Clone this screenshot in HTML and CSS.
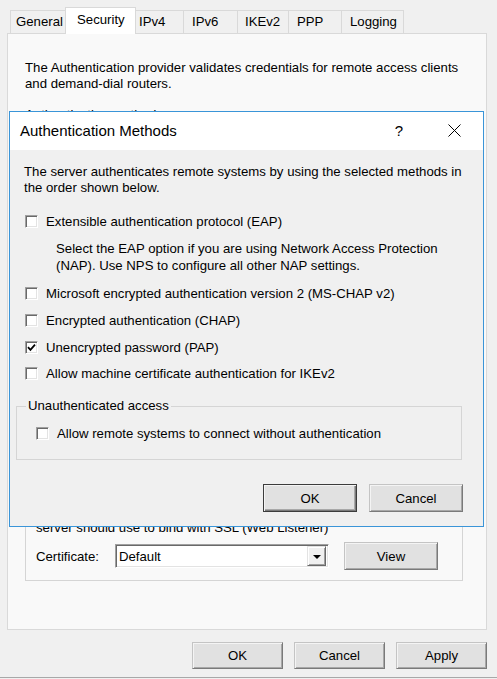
FILE: index.html
```html
<!DOCTYPE html>
<html>
<head>
<meta charset="utf-8">
<link rel="stylesheet" href="styles.css">
</head>
<body>
<div class="window">
  <div class="tabs">
    <div class="tab tab-general">General</div>
    <div class="tab tab-security selected">Security</div>
    <div class="tab tab-ipv4">IPv4</div>
    <div class="tab tab-ipv6">IPv6</div>
    <div class="tab tab-ikev2">IKEv2</div>
    <div class="tab tab-ppp">PPP</div>
    <div class="tab tab-logging">Logging</div>
  </div>
  <div class="panel">
    <p class="intro">The Authentication provider validates credentials for remote access clients and demand-dial routers.</p>
    <p class="label">Authentication methods:</p>
    <fieldset class="ssl">
      <legend>SSL Certificate Binding</legend>
      <p class="ssl-text">Select the certificate that the Secure Socket Tunneling Protocol (SSTP)<br>server should use to bind with SSL (Web Listener)</p>
      <div class="cert-row">
        <span class="cert-label">Certificate:</span>
        <div class="select"><span class="select-value">Default</span><span class="select-btn"><span class="tri"></span></span></div>
        <button class="btn view-btn">View</button>
      </div>
    </fieldset>
  </div>
  <div class="footer">
    <button class="btn foot-btn">OK</button>
    <button class="btn foot-btn">Cancel</button>
    <button class="btn foot-btn">Apply</button>
  </div>

  <div class="dialog">
    <div class="dlg-title">
      <span class="dlg-name">Authentication Methods</span>
      <span class="help">?</span>
      <svg class="close" width="13" height="13" viewBox="0 0 13 13"><path d="M0.5 0.5 L12.5 12.5 M12.5 0.5 L0.5 12.5" stroke="#000" stroke-width="1" fill="none"/></svg>
    </div>
    <div class="dlg-body">
      <p class="dlg-intro">The server authenticates remote systems by using the selected methods in<br>the order shown below.</p>
      <div class="check-row first"><span class="cb"></span><span>Extensible authentication protocol (EAP)</span></div>
      <p class="note">Select the EAP option if you are using Network Access Protection<br>(NAP). Use NPS to configure all other NAP settings.</p>
      <div class="check-row gap-a"><span class="cb"></span><span>Microsoft encrypted authentication version 2 (MS-CHAP v2)</span></div>
      <div class="check-row gap-a"><span class="cb"></span><span>Encrypted authentication (CHAP)</span></div>
      <div class="check-row gap-a"><span class="cb checked"><svg width="9" height="9" viewBox="0 0 9 9"><path d="M1 4.2 L3.4 6.8 L8 1.6" stroke="#000" stroke-width="1.8" fill="none"/></svg></span><span>Unencrypted password (PAP)</span></div>
      <div class="check-row gap-b"><span class="cb"></span><span>Allow machine certificate authentication for IKEv2</span></div>
      <fieldset class="group">
        <legend>Unauthenticated access</legend>
        <div class="check-row inner"><span class="cb"></span><span>Allow remote systems to connect without authentication</span></div>
      </fieldset>
      <div class="dlg-buttons">
        <button class="btn dlg-btn default">OK</button>
        <button class="btn dlg-btn">Cancel</button>
      </div>
    </div>
  </div>
</div>
</body>
</html>
```

FILE: styles.css
```css
* { box-sizing: border-box; }
html, body { margin: 0; padding: 0; }
body {
  background: #f0f0f0;
  font-family: "Liberation Sans", Arial, sans-serif;
  font-size: 13.2px;
  color: #000;
  width: 497px;
  height: 679px;
  overflow: hidden;
}
p { margin: 0; }
.window {
  position: relative;
  height: 678px;
  border-bottom: 1px solid #a8a8a8;
}

/* tabs */
.tabs {
  position: relative;
  z-index: 1;
  display: flex;
  align-items: flex-end;
  height: 33px;
  padding-left: 10px;
}
.tab {
  height: 23px;
  line-height: 22px;
  border: 1px solid #d9d9d9;
  border-bottom: none;
  background: #f0f0f0;
  margin-left: -1px;
  white-space: nowrap;
}
.tab-general { width: 58px; padding-left: 5px; margin-left: 0; }
.tab-security { width: 67px; padding-left: 10px; }
.tab-ipv4 { width: 51px; padding-left: 5px; }
.tab-ipv6 { width: 55px; padding-left: 8px; }
.tab-ikev2 { width: 52px; padding-left: 7px; }
.tab-ppp { width: 54px; padding-left: 8px; }
.tab-logging { width: 63px; padding-left: 8px; }
.tab.selected {
  height: 27px;
  line-height: 24px;
  margin: 0 -2px -1px -3px;
  width: 71px;
  padding-left: 11px;
  background: #fff;
  position: relative;
  z-index: 2;
}

/* panel */
.panel {
  margin: 0 10px 0 7px;
  height: 597px;
  border: 1px solid #d9d9d9;
  background: #f9f9f9;
  padding: 26px 23px 0 17px;
}
.intro { line-height: 16px; }
.label { line-height: 16px; margin-top: 15px; }
.ssl {
  margin: 347px 0 0 0;
  padding: 18px 0 10px 10px;
  border: 1px solid #d5d5d5;
  min-width: 0;
}
.ssl legend { padding: 0 2px; line-height: 16px; }
.ssl-text { line-height: 16px; }
.cert-row {
  display: flex;
  align-items: center;
  height: 28px;
  margin-top: 6px;
}
.cert-label { width: 79px; }
.select {
  width: 214px;
  height: 24px;
  background: #fff;
  border: 1px solid;
  border-color: #a0a0a0 #fff #fff #a0a0a0;
  box-shadow: inset 1px 1px 0 #696969, inset -1px -1px 0 #e3e3e3;
  display: flex;
  align-items: center;
  padding: 2px 2px 2px 3px;
}
.select-value { flex: 1; }
.select-btn {
  width: 19px;
  height: 20px;
  background: #f0f0f0;
  border: 1px solid;
  border-color: #e3e3e3 #696969 #696969 #e3e3e3;
  box-shadow: inset 1px 1px 0 #fff, inset -1px -1px 0 #a0a0a0;
  display: flex;
  align-items: center;
  justify-content: center;
}
.tri {
  width: 0;
  height: 0;
  border-left: 4px solid transparent;
  border-right: 4px solid transparent;
  border-top: 4px solid #000;
  margin-top: 1px;
}

/* buttons */
.btn {
  font-family: "Liberation Sans", Arial, sans-serif;
  font-size: 13.2px;
  color: #000;
  background: #e1e1e1;
  border: 1px solid;
  border-color: #c4c4c4 #7a7a7a #7a7a7a #c4c4c4;
  box-shadow: inset 1px 1px 0 #f4f4f4, inset -1px -1px 0 #a8a8a8;
  padding: 0;
  margin: 0;
}
.view-btn { width: 94px; height: 28px; margin-left: 15px; }

.footer {
  display: flex;
  justify-content: flex-end;
  gap: 11px;
  padding-right: 10px;
  margin-top: 12px;
}
.foot-btn { width: 91px; height: 27px; }

/* dialog */
.dialog {
  position: absolute;
  left: 9px;
  top: 111px;
  width: 475px;
  height: 416px;
  z-index: 5;
  border: 1px solid #3a95d8;
  background: #f0f0f0;
  display: flex;
  flex-direction: column;
}
.dlg-title {
  height: 38px;
  background: #fff;
  display: flex;
  align-items: center;
  padding-left: 10px;
  padding-bottom: 1px;
  flex-shrink: 0;
}
.dlg-name { font-size: 15px; }
.help {
  margin-left: auto;
  width: 20px;
  text-align: center;
  font-size: 15px;
}
.close { margin: 0 22px 0 39px; }
.dlg-body { padding: 14px 21px 0 14px; }
.dlg-intro { line-height: 16px; }
.check-row {
  display: flex;
  align-items: center;
  height: 16px;
  white-space: nowrap;
}
.check-row.first { margin-top: 17px; }
.check-row.gap-a { margin-top: 11px; }
.check-row.gap-b { margin-top: 10px; }
.cb {
  width: 13px;
  height: 13px;
  flex-shrink: 0;
  margin: 0 8px 0 1px;
  background: #fff;
  border: 1px solid;
  border-color: #a0a0a0 #fff #fff #a0a0a0;
  box-shadow: inset 1px 1px 0 #696969, inset -1px -1px 0 #e3e3e3;
  display: flex;
  align-items: center;
  justify-content: center;
}
.note {
  line-height: 17px;
  padding-left: 32px;
  margin-top: 11px;
}
.group {
  margin: 17px 0 0 -8px;
  padding: 0 0 18px 9px;
  border: 1px solid #d5d5d5;
  min-width: 0;
}
.group legend { padding: 0 2px; line-height: 16px; }
.check-row.inner { margin-top: 11px; }
.check-row.inner .cb { margin-left: 10px; }
.dlg-buttons {
  display: flex;
  justify-content: flex-end;
  gap: 12px;
  margin-top: 24px;
  margin-right: -1px;
}
.dlg-btn { width: 94px; height: 28px; }
.dlg-btn.default {
  border-color: #3c3c3c;
  box-shadow: inset 1px 1px 0 #f4f4f4, inset -1px -1px 0 #7a7a7a, inset -2px -2px 0 #a8a8a8;
}
```
